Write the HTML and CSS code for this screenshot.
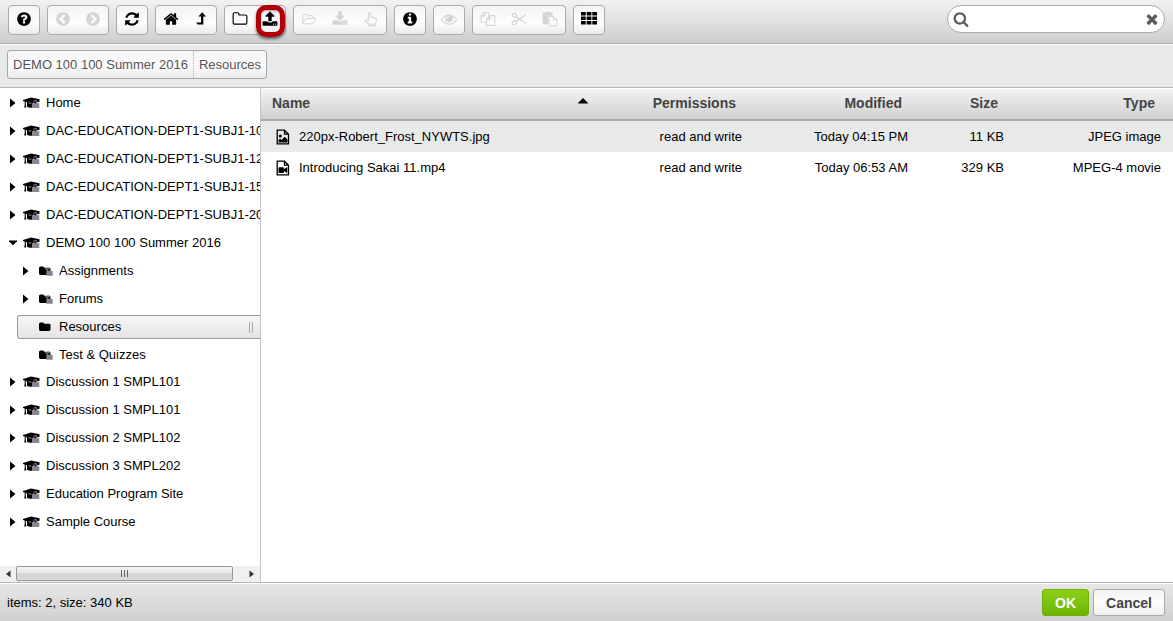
FILE: index.html
```
<!DOCTYPE html>
<html lang="en">
<head>
<meta charset="utf-8">
<title>Resources</title>
<link rel="stylesheet" href="styles.css">
</head>
<body>
<svg class="sprite" aria-hidden="true">
  <symbol id="help" viewBox="0 0 1792 1792"><path d="M1024 1376v-192q0-14-9-23t-23-9h-192q-14 0-23 9t-9 23v192q0 14 9 23t23 9h192q14 0 23-9t9-23zm256-672q0-88-55.5-163t-138.5-116-170-41q-243 0-371 213-15 24 8 42l132 100q7 6 19 6 16 0 25-12 53-68 86-92 34-24 86-24 48 0 85.5 26t37.5 59q0 38-20 61t-68 45q-63 28-115.5 86.5t-52.5 125.5v36q0 14 9 23t23 9h192q14 0 23-9t9-23q0-19 21.5-49.5t54.5-49.5q32-18 49-28.5t46-35 44.5-48 28-60.5 12.5-81zm384 192q0 209-103 385.5t-279.5 279.5-385.5 103-385.5-103-279.5-279.5-103-385.5 103-385.5 279.5-279.5 385.5-103 385.5 103 279.5 279.5 103 385.5z"/></symbol>
  <symbol id="prev" viewBox="0 0 1792 1792"><path d="M1037 1395l102-102q19-19 19-45t-19-45l-307-307 307-307q19-19 19-45t-19-45l-102-102q-19-19-45-19t-45 19l-454 454q-19 19-19 45t19 45l454 454q19 19 45 19t45-19zm627-499q0 209-103 385.5t-279.5 279.5-385.5 103-385.5-103-279.5-279.5-103-385.5 103-385.5 279.5-279.5 385.5-103 385.5 103 279.5 279.5 103 385.5z"/></symbol>
  <symbol id="next" viewBox="0 0 1792 1792"><path d="M845 1395l454-454q19-19 19-45t-19-45l-454-454q-19-19-45-19t-45 19l-102 102q-19 19-19 45t19 45l307 307-307 307q-19 19-19 45t19 45l102 102q19 19 45 19t45-19zm819-499q0 209-103 385.5t-279.5 279.5-385.5 103-385.5-103-279.5-279.5-103-385.5 103-385.5 279.5-279.5 385.5-103 385.5 103 279.5 279.5 103 385.5z"/></symbol>
  <symbol id="refresh" viewBox="0 0 1792 1792"><path d="M1639 1056q0 5-1 7-64 268-268 434.5t-478 166.5q-146 0-282.5-55t-243.5-157l-129 129q-19 19-45 19t-45-19-19-45v-448q0-26 19-45t45-19h448q26 0 45 19t19 45-19 45l-137 137q71 66 161 102t187 36q134 0 250-65t186-179q11-17 53-117 8-23 30-23h192q13 0 22.5 9.5t9.5 22.5zm25-800v448q0 26-19 45t-45 19h-448q-26 0-45-19t-19-45 19-45l138-138q-148-137-349-137-134 0-250 65t-186 179q-11 17-53 117-8 23-30 23h-199q-13 0-22.5-9.5t-9.5-22.5v-7q65-268 270-434.5t480-166.5q146 0 284 55.5t245 156.5l130-129q19-19 45-19t45 19 19 45z"/></symbol>
  <symbol id="home" viewBox="0 0 1792 1792"><path d="M1472 992v480q0 26-19 45t-45 19h-384v-384h-256v384h-384q-26 0-45-19t-19-45v-480q0-1 .5-3t.5-3l575-474 575 474q1 2 1 6zm223-69l-62 74q-8 9-21 11h-3q-13 0-21-7l-692-577-692 577q-12 8-24 7-13-2-21-11l-62-74q-8-10-7-23.5t11-21.5l719-599q32-26 76-26t76 26l244 204v-195q0-14 9-23t23-9h192q14 0 23 9t9 23v408l219 182q10 8 11 21.5t-7 23.5z"/></symbol>
  <symbol id="up" viewBox="0 0 16 16"><path d="M9.200 1.200 13 5.600h-2.700v7.800H4.800L3 11.400h5.100V5.600H5.400z"/></symbol>
  <symbol id="folder-o" viewBox="0 0 1792 1792"><path d="M1600 1312v-704q0-40-28-68t-68-28h-704q-40 0-68-28t-28-68v-64q0-40-28-68t-68-28h-320q-40 0-68 28t-28 68v960q0 40 28 68t68 28h1216q40 0 68-28t28-68zm128-704v704q0 92-66 158t-158 66h-1216q-92 0-158-66t-66-158v-960q0-92 66-158t158-66h320q92 0 158 66t66 158v32h672q92 0 158 66t66 158z"/></symbol>
  <symbol id="upload" viewBox="0 0 1792 1792"><path d="M1344 1472q0-26-19-45t-45-19-45 19-19 45 19 45 45 19 45-19 19-45zm256 0q0-26-19-45t-45-19-45 19-19 45 19 45 45 19 45-19 19-45zm128-224v320q0 40-28 68t-68 28h-1472q-40 0-68-28t-28-68v-320q0-40 28-68t68-28h427q21 56 70.5 92t110.5 36h256q61 0 110.5-36t70.5-92h427q40 0 68 28t28 68zm-325-648q-17 40-59 40h-256v448q0 26-19 45t-45 19h-256q-26 0-45-19t-19-45v-448h-256q-42 0-59-40-17-39 14-69l448-448q18-19 45-19t45 19l448 448q31 30 14 69z"/></symbol>
  <symbol id="open" viewBox="0 0 18 16"><path fill="none" stroke="currentColor" stroke-width="1.1" stroke-linejoin="round" d="M2 12.5V3.6q0-1 1-1h3.2q1 0 1 1v.8h5.2q1 0 1 1v2M2 12.8 5 8q.4-.6 1.2-.6h9.9q1 0 .5.8l-2.7 4.6q-.4.6-1.2.6H2.6q-.8 0-.6-.6z"/></symbol>
  <symbol id="download" viewBox="0 0 1792 1792"><path d="M1344 1344q0-26-19-45t-45-19-45 19-19 45 19 45 45 19 45-19 19-45zm256 0q0-26-19-45t-45-19-45 19-19 45 19 45 45 19 45-19 19-45zm128-224v320q0 40-28 68t-68 28h-1472q-40 0-68-28t-28-68v-320q0-40 28-68t68-28h465l135 136q58 56 136 56t136-56l136-136h464q40 0 68 28t28 68zm-325-569q17 41-14 70l-448 448q-18 19-45 19t-45-19l-448-448q-31-29-14-70 17-39 59-39h256v-448q0-26 19-45t45-19h256q26 0 45 19t19 45v448h256q42 0 59 39z"/></symbol>
  <symbol id="hand" viewBox="0 0 16 16"><path fill="none" stroke="currentColor" stroke-width="1.1" stroke-linejoin="round" d="M5.400 9.600V2.700q0-1.200 1.100-1.200t1.100 1.200v3.600q1.200-.5 1.900.4 1.200-.3 1.800.5 2-.1 2 1.800 0 2-1 4.200v1.400H6.200v-1.300Q4.900 11.700 3 11.200q-1.200-.3-1-1.400.3-.9 1.600-.8.9.1 1.800.6zM6.200 13h6.100"/></symbol>
  <symbol id="info" viewBox="0 0 1792 1792"><path d="M1152 1376v-160q0-14-9-23t-23-9h-96v-512q0-14-9-23t-23-9h-320q-14 0-23 9t-9 23v160q0 14 9 23t23 9h96v320h-96q-14 0-23 9t-9 23v160q0 14 9 23t23 9h448q14 0 23-9t9-23zm-128-896v-160q0-14-9-23t-23-9h-192q-14 0-23 9t-9 23v160q0 14 9 23t23 9h192q14 0 23-9t9-23zm640 416q0 209-103 385.5t-279.5 279.5-385.5 103-385.5-103-279.5-279.5-103-385.5 103-385.5 279.5-279.5 385.5-103 385.5 103 279.5 279.5 103 385.5z"/></symbol>
  <symbol id="eye" viewBox="0 0 1792 1792"><path d="M1664 960q-152-236-381-353 61 104 61 225 0 185-131.5 316.5t-316.5 131.5-316.5-131.5-131.5-316.5q0-121 61-225-229 117-381 353 133 205 333.5 326.5t434.5 121.5 434.5-121.5 333.5-326.5zm-720-384q0-20-14-34t-34-14q-125 0-214.5 89.5t-89.5 214.5q0 20 14 34t34 14 34-14 14-34q0-86 61-147t147-61q20 0 34-14t14-34zm848 384q0 34-20 69-140 230-376.5 368.5t-499.5 138.5-499.5-139-376.5-368q-20-35-20-69t20-69q140-229 376.5-368t499.5-139 499.5 139 376.5 368q20 35 20 69z"/></symbol>
  <symbol id="copy" viewBox="0 0 16 16"><path fill="none" stroke="currentColor" stroke-width="1.1" stroke-linejoin="round" d="M6.300 11.300H1.200V5L4.600 1.500h4.200v3.700M4.600 1.500V5H1.200M14.800 4.600v9.900H6.500V8.400L10 4.600zM10 4.600v3.800H6.500"/></symbol>
  <symbol id="cut" viewBox="0 0 16 16"><g fill="none" stroke="currentColor" stroke-width="1.3"><ellipse cx="3.400" cy="4.300" rx="2.300" ry="1.700" transform="rotate(25 3.400 4.300)"/><ellipse cx="3.400" cy="11.700" rx="2.300" ry="1.700" transform="rotate(-25 3.400 11.700)"/><path d="m5.300 5.700 2.900 2 6.600-3.600M5.300 10.300l2.900-2 6.600 3.900M8 8h2"/></g></symbol>
  <symbol id="paste" viewBox="0 0 16 16"><path d="M1.500 1.500H4V.8h4v.7h2.600v3.200H6.300v8.800H1.500q-.9 0-.9-.9V2.400q0-.9.900-.9z"/><path fill="none" stroke="currentColor" d="M7.200 5.500h4.200l3.600 3.300v6H7.200zM11.300 5.500v3.400H15"/></symbol>
  <symbol id="grid" viewBox="0 0 16 16"><path d="M0 1h4.700v3.500H0zM5.700 1h4.700v3.500H5.700zM11.300 1H16v3.500h-4.700zM0 5.500h4.700V9H0zM5.700 5.500h4.700V9H5.700zM11.300 5.500H16V9h-4.700zM0 10h4.700v3.500H0zM5.700 10h4.700v3.500H5.700zM11.300 10H16v3.500h-4.700z"/></symbol>
  <symbol id="search" viewBox="0 0 1792 1792"><path d="M1216 832q0-185-131.5-316.5t-316.5-131.5-316.5 131.5-131.5 316.5 131.5 316.5 316.5 131.5 316.5-131.5 131.5-316.5zm512 832q0 52-38 90t-90 38q-54 0-90-38l-343-342q-179 124-399 124-143 0-273.5-55.5t-225-150-150-225-55.5-273.5 55.5-273.5 150-225 225-150 273.5-55.5 273.5 55.5 225 150 150 225 55.5 273.5q0 220-124 399l343 343q37 37 37 90z"/></symbol>
  <symbol id="clear" viewBox="0 0 1792 1792"><path d="M1490 1322q0 40-28 68l-136 136q-28 28-68 28t-68-28l-294-294-294 294q-28 28-68 28t-68-28l-136-136q-28-28-28-68t28-68l294-294-294-294q-28-28-28-68t28-68l136-136q28-28 68-28t68 28l294 294 294-294q28-28 68-28t68 28l136 136q28 28 28 68t-28 68l-294 294 294 294q28 28 28 68z"/></symbol>
  <symbol id="right" viewBox="0 0 8 10"><path d="M1 .6 6.500 5 1 9.400z"/></symbol>
  <symbol id="down" viewBox="0 0 8 10"><path d="M0 2.500h8v.8L4 7.200 0 3.300z"/></symbol>
  <symbol id="left" viewBox="0 0 8 10"><path d="M6.500 1.500 2 5l4.500 3.500z"/></symbol>
  <symbol id="cap" viewBox="0 0 17 12"><path d="M0 2.900 8 .6l8.500 1.700v2.400L9 6.500h.5v4.200q-3.500.6-5.500-1V5.300l-1.200-.3V8l.6 2.600H1.200L1.700 8V4.500L0 4z"/><path fill="#8a888c" d="M9.400 6.300h.9V4.900q0-1.900 2-1.900t2 1.900v1.400h2V11H9.400z"/><path fill="#171925" d="M11.300 6.200V5q0-1 1-1t1 1v1.200zM10.300 3.400h1.200v1h-1.200z"/><path fill="#9ba0aa" d="M5.100 5.500h2.700l1 .9H6z"/></symbol>
  <symbol id="folder" viewBox="0 0 17 12"><path d="M3 3q0-1.500 1.400-1.500h2.400q1.100 0 1.300 1.200h5q1.400 0 1.400 1.400v4.500q0 1.400-1.400 1.400H4.400Q3 10 3 8.600z"/></symbol>
  <symbol id="locked" viewBox="0 0 17 12"><path d="M3 3q0-1.500 1.400-1.500h2.400q1.100 0 1.300 1.200h5q1.400 0 1.400 1.400v4.500q0 1.400-1.400 1.400H4.400Q3 10 3 8.600z"/><path fill="#858388" d="M10.300 6h.8V4.500q0-1.900 1.900-1.900t1.900 1.900V6h1.800v4.800h-6.400z"/><path fill="#171925" d="M12.100 5.900V4.600q0-1 .9-1t.9 1v1.300z"/><path fill="#b5b7bc" d="M9.600 2.900h1v2h-1z"/></symbol>
  <symbol id="image" viewBox="0 0 14 16"><path fill="none" stroke="currentColor" stroke-width="1.3" d="M1.200 1.200h7.300l4 4v9.600H1.200zM8.500 1.200v4h4"/><path d="M2.500 13.500v-2.400L4 9.600l1.500 1.300 3-3.200 3 2.900v2.900z"/><circle cx="4.300" cy="7" r="1.500"/></symbol>
  <symbol id="video" viewBox="0 0 14 16"><path fill="none" stroke="currentColor" stroke-width="1.3" d="M1.200 1.200h7.300l4 4v9.600H1.200zM8.500 1.200v4h4"/><path d="M3.400 7.300h3.600q.9 0 .9.900v1l3.400-2.300v6.400L7.900 11v1.200q0 .9-.9.900H3.400q-.9 0-.9-.9v-4q0-.9.900-.9z"/></symbol>
</svg>

<header class="toolbar">
  <div class="group"><button aria-label="Help"><svg class="icon"><use href="#help"/></svg></button></div>
  <div class="group"><button disabled aria-label="Back"><svg class="icon"><use href="#prev"/></svg></button><button disabled aria-label="Forward"><svg class="icon"><use href="#next"/></svg></button></div>
  <div class="group"><button aria-label="Reload"><svg class="icon"><use href="#refresh"/></svg></button></div>
  <div class="group"><button aria-label="Home folder"><svg class="icon"><use href="#home"/></svg></button><button aria-label="Up one folder"><svg class="icon"><use href="#up"/></svg></button></div>
  <div class="group"><button aria-label="New folder"><svg class="icon"><use href="#folder-o"/></svg></button><button class="marked" aria-label="Upload files"><svg class="icon"><use href="#upload"/></svg></button></div>
  <div class="group group-wide"><button disabled aria-label="Open"><svg class="icon"><use href="#open"/></svg></button><button disabled aria-label="Download"><svg class="icon"><use href="#download"/></svg></button><button disabled aria-label="Select"><svg class="icon"><use href="#hand"/></svg></button></div>
  <div class="group"><button aria-label="Get info"><svg class="icon"><use href="#info"/></svg></button></div>
  <div class="group"><button disabled aria-label="Preview"><svg class="icon"><use href="#eye"/></svg></button></div>
  <div class="group group-wide"><button disabled aria-label="Copy"><svg class="icon"><use href="#copy"/></svg></button><button disabled aria-label="Cut"><svg class="icon"><use href="#cut"/></svg></button><button disabled aria-label="Paste"><svg class="icon"><use href="#paste"/></svg></button></div>
  <div class="group"><button aria-label="Icon view"><svg class="icon"><use href="#grid"/></svg></button></div>
  <form class="search" role="search">
    <svg class="icon"><use href="#search"/></svg>
    <input type="text" aria-label="Search files">
    <button type="reset" aria-label="Clear search"><svg class="icon"><use href="#clear"/></svg></button>
  </form>
</header>

<nav class="pathbar" aria-label="Path">
  <div class="path"><a href="#">DEMO 100 100 Summer 2016</a><a href="#">Resources</a></div>
</nav>

<main class="work">
  <aside class="side">
    <ul class="tree">
      <li><a href="#"><svg class="arrow"><use href="#right"/></svg><svg class="mark"><use href="#cap"/></svg>Home</a></li>
      <li><a href="#"><svg class="arrow"><use href="#right"/></svg><svg class="mark"><use href="#cap"/></svg>DAC-EDUCATION-DEPT1-SUBJ1-101</a></li>
      <li><a href="#"><svg class="arrow"><use href="#right"/></svg><svg class="mark"><use href="#cap"/></svg>DAC-EDUCATION-DEPT1-SUBJ1-126</a></li>
      <li><a href="#"><svg class="arrow"><use href="#right"/></svg><svg class="mark"><use href="#cap"/></svg>DAC-EDUCATION-DEPT1-SUBJ1-151</a></li>
      <li><a href="#"><svg class="arrow"><use href="#right"/></svg><svg class="mark"><use href="#cap"/></svg>DAC-EDUCATION-DEPT1-SUBJ1-201</a></li>
      <li><a href="#"><svg class="arrow"><use href="#down"/></svg><svg class="mark"><use href="#cap"/></svg>DEMO 100 100 Summer 2016</a></li>
      <li>
        <ul class="subtree">
          <li><a href="#"><svg class="arrow"><use href="#right"/></svg><svg class="mark"><use href="#locked"/></svg>Assignments</a></li>
          <li><a href="#"><svg class="arrow"><use href="#right"/></svg><svg class="mark"><use href="#locked"/></svg>Forums</a></li>
          <li><a href="#" class="selected" aria-current="true"><svg class="arrow"></svg><svg class="mark"><use href="#folder"/></svg>Resources<span class="grip"></span></a></li>
          <li><a href="#"><svg class="arrow"></svg><svg class="mark"><use href="#locked"/></svg>Test &amp; Quizzes</a></li>
        </ul>
      </li>
      <li><a href="#"><svg class="arrow"><use href="#right"/></svg><svg class="mark"><use href="#cap"/></svg>Discussion 1 SMPL101</a></li>
      <li><a href="#"><svg class="arrow"><use href="#right"/></svg><svg class="mark"><use href="#cap"/></svg>Discussion 1 SMPL101</a></li>
      <li><a href="#"><svg class="arrow"><use href="#right"/></svg><svg class="mark"><use href="#cap"/></svg>Discussion 2 SMPL102</a></li>
      <li><a href="#"><svg class="arrow"><use href="#right"/></svg><svg class="mark"><use href="#cap"/></svg>Discussion 3 SMPL202</a></li>
      <li><a href="#"><svg class="arrow"><use href="#right"/></svg><svg class="mark"><use href="#cap"/></svg>Education Program Site</a></li>
      <li><a href="#"><svg class="arrow"><use href="#right"/></svg><svg class="mark"><use href="#cap"/></svg>Sample Course</a></li>
    </ul>
    <div class="scrollbar">
      <button aria-label="Scroll left"><svg class="arrow"><use href="#left"/></svg></button>
      <div class="track"><div class="thumb"><i></i><i></i><i></i></div></div>
      <button class="flip" aria-label="Scroll right"><svg class="arrow"><use href="#left"/></svg></button>
    </div>
  </aside>
  <section class="files">
    <table>
      <colgroup><col><col class="c-perm"><col class="c-date"><col class="c-size"><col class="c-kind"></colgroup>
      <thead>
        <tr><th aria-sort="ascending"><div class="name-head">Name<svg class="sort" viewBox="0 0 10 6"><path d="M0 5.500V5L5 0l5 5v.5z"/></svg></div></th><th>Permissions</th><th>Modified</th><th>Size</th><th>Type</th></tr>
      </thead>
      <tbody>
        <tr class="hover"><td><div class="file"><svg class="doc"><use href="#image"/></svg>220px-Robert_Frost_NYWTS.jpg</div></td><td>read and write</td><td>Today 04:15 PM</td><td>11 KB</td><td>JPEG image</td></tr>
        <tr><td><div class="file"><svg class="doc"><use href="#video"/></svg>Introducing Sakai 11.mp4</div></td><td>read and write</td><td>Today 06:53 AM</td><td>329 KB</td><td>MPEG-4 movie</td></tr>
      </tbody>
    </table>
  </section>
</main>

<footer class="status">
  <span>items: 2, size: 340 KB</span>
  <button class="btn btn-ok">OK</button>
  <button class="btn">Cancel</button>
</footer>
</body>
</html>
```
FILE: styles.css
```
* { box-sizing: border-box; }
body {
  margin: 0;
  min-height: 100vh;
  display: flex;
  flex-direction: column;
  background: #fff;
  color: #000;
  font: 13px/16px "Liberation Sans", Arial, sans-serif;
}
a { color: inherit; text-decoration: none; }
button { margin: 0; padding: 0; border: 0; background: none; color: inherit; font: inherit; }
ul { list-style: none; margin: 0; padding: 0; }
svg { flex: none; fill: currentColor; }
.sprite { position: absolute; width: 0; height: 0; }
.icon { display: block; width: 16px; height: 16px; }

/* Toolbar */
.toolbar {
  display: flex;
  align-items: flex-start;
  gap: 7px;
  padding: 5px 8px 8px;
  border-bottom: 1px solid #a8aaa9;
  background: linear-gradient(#f2f2f2, #cdcfcd);
}
.group {
  display: flex;
  border: 1px solid #aaa;
  border-radius: 4px;
  background: linear-gradient(#f4f4f4, #fdfdfd 60%, #ebebeb);
}
.group-wide { gap: 1px; }
.group button {
  position: relative;
  display: flex;
  justify-content: center;
  width: 30px;
  height: 28px;
  padding-top: 5px;
}
.group button:disabled { color: #d3d5d4; }
.marked::after {
  content: "";
  position: absolute;
  inset: -1px 0 -3px 1px;
  border: 5px solid #b30006;
  border-radius: 10px;
  box-shadow: 0 2px 3px rgba(0, 0, 0, .55), inset 0 1px 2px rgba(0, 0, 0, .35);
}
.search {
  display: flex;
  align-items: center;
  width: 218px;
  height: 28px;
  margin-left: auto;
  padding: 0 4px 0 5px;
  border: 1px solid #aaa;
  border-radius: 14px;
  background: #fff;
  color: #5c5c60;
}
.search input {
  flex: 1;
  min-width: 0;
  border: 0;
  outline: 0;
  background: none;
  font: inherit;
}

/* Path */
.pathbar {
  display: flex;
  padding: 5px 7px 8px;
  border-top: 1px solid #fff;
  border-bottom: 1px solid #b5b7b6;
  background: #e8eaea;
}
.path {
  display: flex;
  border: 1px solid #a6a8a7;
  border-radius: 3px;
  background: linear-gradient(#f4f4f4, #fcfcfc 50%, #ececec);
  color: #555;
}
.path a { padding: 6px 5px 5px; line-height: 16px; }
.path a + a { border-left: 1px dotted #aaa; }

/* Folder tree */
.work { flex: 1; display: flex; min-height: 0; }
.side {
  display: flex;
  flex-direction: column;
  flex: none;
  width: 261px;
  border-right: 1px solid #c4c4c4;
  overflow: hidden;
}
.tree { flex: 1; padding-top: 1px; overflow: hidden; white-space: nowrap; }
.tree a {
  display: flex;
  align-items: center;
  height: 24px;
  margin: 0 0 4px 4px;
  padding-left: 4px;
  border: 1px solid transparent;
  border-right: 0;
}
.tree > li:first-child { padding-top: 2px; }
.subtree { margin-bottom: -1px; padding-left: 13px; }
.arrow { width: 8px; height: 10px; }
.mark { width: 17px; height: 12px; margin: 0 6px; }
.tree .selected {
  border-color: #9a9a9a;
  border-radius: 3px 0 0 3px;
  background: linear-gradient(#f6f6f6, #e4e4e4);
}
.grip {
  width: 4px;
  height: 11px;
  margin: 0 7px 0 auto;
  border: solid #aaa;
  border-width: 0 1px;
}
.scrollbar { display: flex; height: 16px; background: #f0f0f0; }
.scrollbar button { display: grid; place-items: center; width: 16px; color: #333; }
.scrollbar .arrow { width: 8px; height: 10px; }
.flip { transform: scaleX(-1); }
.track { flex: 1; padding-right: 11px; }
.thumb {
  display: flex;
  align-items: center;
  justify-content: center;
  gap: 2px;
  height: 15px;
  border: 1px solid #979797;
  border-radius: 2px;
  background: linear-gradient(#f3f3f3, #e6e6e6 48%, #d2d4d3 52%, #dadada);
}
.thumb i { width: 1px; height: 7px; background: #666; }

/* File list */
.files { flex: 1; min-width: 0; }
table { width: 100%; table-layout: fixed; border-collapse: separate; border-spacing: 0; }
.c-perm { width: 161px; }
.c-date { width: 166px; }
.c-size { width: 96px; }
.c-kind { width: 157px; }
thead tr { background: linear-gradient(#fff 1px, #f2f2f2 1px, #cdcfcd); }
th {
  height: 33px;
  padding: 0 18px 2px 11px;
  border-bottom: 2px solid #abadac;
  color: #444;
  font-size: 14px;
  text-align: right;
}
th:first-child { padding-right: 5px; }
td { height: 31px; padding: 0 12px 0 15px; text-align: right; white-space: nowrap; }
.hover { background: #e8eaea; }
.name-head { display: flex; justify-content: space-between; }
.sort { width: 10px; height: 6px; margin: 3px 0 0; color: #000; }
.file { display: flex; align-items: center; gap: 9px; }
.doc { width: 14px; height: 16px; }

/* Status bar */
.status {
  display: flex;
  align-items: center;
  gap: 4px;
  padding: 6px 8px 5px 7px;
  border-top: 1px solid #b5b7b6;
  background: linear-gradient(#fff 1px, #e6e6e6 1px, #cfd1d0);
}
.status span { flex: 1; }
.btn {
  height: 27px;
  padding: 0 12px;
  border: 1px solid #aaa;
  border-radius: 3px;
  background: linear-gradient(#f2f2f2, #fefefe 50%, #efefef);
  color: #444;
  font-size: 14px;
  font-weight: bold;
}
.btn-ok {
  border-color: #6fb00d;
  background: linear-gradient(#8bcf17, #7cc312 50%, #6cb400);
  color: #fff;
}
```
